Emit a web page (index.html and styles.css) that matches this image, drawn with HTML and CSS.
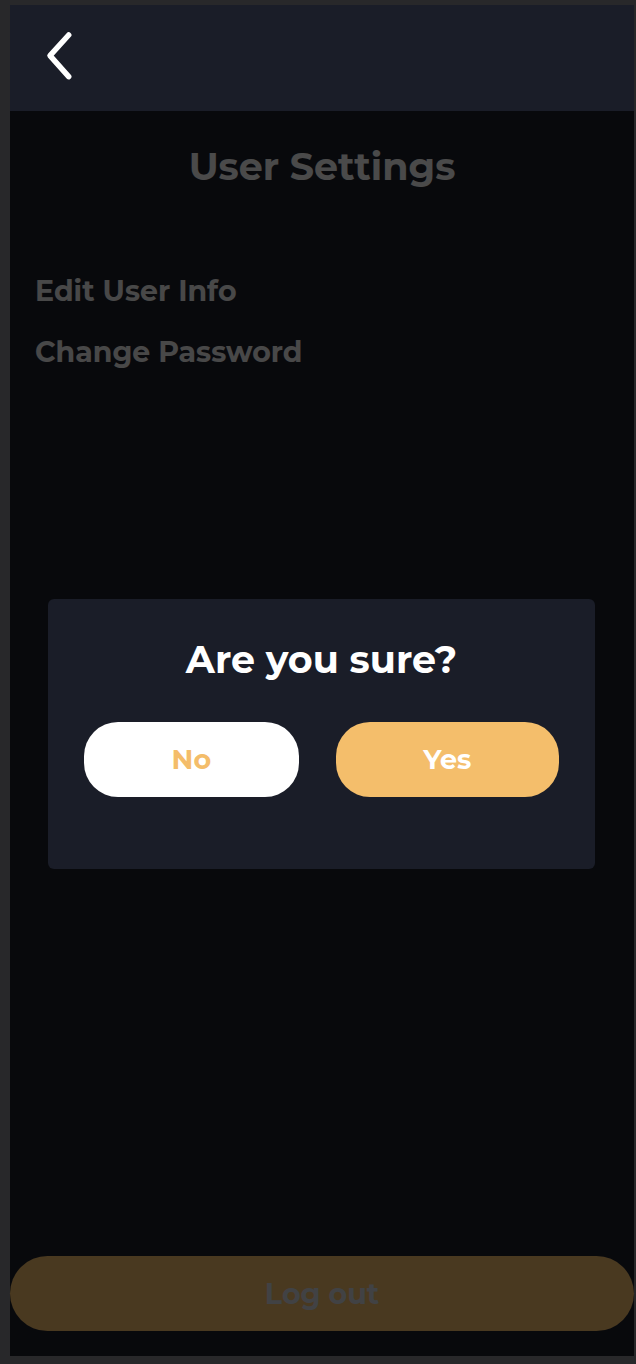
FILE: index.html
```html
<!DOCTYPE html>
<html lang="en">
<head>
<meta charset="utf-8">
<title>User Settings</title>
<link rel="stylesheet" href="styles.css">
</head>
<body>
<div class="phone">
  <header class="topbar">
    <button class="back" aria-label="Back">
      <svg width="32" height="52" viewBox="0 0 32 52" aria-hidden="true">
        <path d="M26.7 5 L8 25.7 L26.7 46.7" fill="none" stroke="#ffffff" stroke-width="5.5" stroke-linecap="round" stroke-linejoin="round"/>
      </svg>
    </button>
  </header>
  <main class="screen">
    <h1 class="title">User Settings</h1>
    <ul class="menu">
      <li class="menu-item">Edit User Info</li>
      <li class="menu-item">Change Password</li>
    </ul>
    <button class="logout">Log out</button>
    <div class="overlay">
      <div class="dialog">
        <h2 class="dialog-title">Are you sure?</h2>
        <div class="dialog-actions">
          <button class="btn btn-no">No</button>
          <button class="btn btn-yes">Yes</button>
        </div>
      </div>
    </div>
  </main>
</div>
</body>
</html>
```
FILE: styles.css
```css
* { box-sizing: border-box; }

html, body {
  margin: 0;
  padding: 0;
}

body {
  background: #28282a;
  font-family: "Montserrat", "Inter", "Noto Sans", sans-serif;
  width: 636px;
  height: 1364px;
  padding: 5px 2px 8px 10px;
}

.phone {
  width: 624px;
  height: 1351px;
  display: flex;
  flex-direction: column;
  background: #1b1e2b;
}

.topbar {
  height: 106px;
  flex: none;
  background: #1a1d28;
  padding: 25px 0 0 32px;
}

.back {
  display: block;
  padding: 0;
  margin: 0;
  border: 0;
  background: none;
  width: 32px;
  height: 52px;
}
.back svg { display: block; }

.screen {
  position: relative;
  flex: 1;
  display: flex;
  flex-direction: column;
}

.title {
  margin: 0;
  padding-top: 32px;
  font-size: 38px;
  line-height: 48px;
  font-weight: 700;
  color: #f7f7f7;
  text-align: center;
}

.menu {
  list-style: none;
  margin: 82px 0 0;
  padding: 0 0 0 25px;
  display: flex;
  flex-direction: column;
  gap: 25px;
}

.menu-item {
  font-size: 28.4px;
  line-height: 36px;
  font-weight: 700;
  color: #f2f2f2;
}

.logout {
  margin: auto 0 25px;
  height: 75px;
  width: 100%;
  border: 0;
  border-radius: 38px;
  background: #f4be6b;
  color: #dbdde3;
  font-family: inherit;
  font-size: 28.5px;
  font-weight: 700;
}

.overlay {
  position: absolute;
  inset: 0;
  background: rgba(0, 0, 0, 0.7);
  display: flex;
  align-items: center;
  padding: 0 39px 0 38px;
}

.dialog {
  flex: 1;
  background: #1a1d28;
  border-radius: 6px;
  padding: 38px 36px 72px;
}

.dialog-title {
  margin: 0;
  font-size: 38px;
  line-height: 46px;
  font-weight: 700;
  color: #ffffff;
  text-align: center;
}

.dialog-actions {
  margin-top: 39px;
  display: flex;
  gap: 37px;
}

.btn {
  flex: 1 1 auto;
  height: 75px;
  border: 0;
  border-radius: 34px;
  font-family: inherit;
  font-size: 27px;
  font-weight: 700;
}

.btn-no {
  background: #ffffff;
  color: #f4bd6a;
}

.btn-yes {
  background: #f4be6b;
  color: #ffffff;
}
```
